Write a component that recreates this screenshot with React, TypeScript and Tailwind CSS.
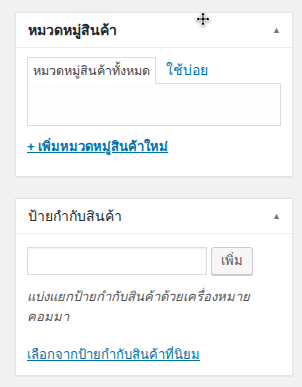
export default function App() {
  return (
    <div className="relative min-h-[387px] w-[302px] bg-[#f1f1f1] pl-[15px] pr-[9px] pt-[12px] font-['Liberation_Sans','Noto_Sans',sans-serif] text-[13px] text-[#444]">
      {/* หมวดหมู่สินค้า */}
      <div className="border border-[#e5e5e5] bg-white shadow-[0_1px_1px_rgba(0,0,0,0.04)]">
        <div className="flex h-[35px] items-center justify-between border-b border-[#eee] pl-[12px] pr-[11px]">
          <h2 className="text-[14px] font-bold leading-[20px] text-[#23282d]">หมวดหมู่สินค้า</h2>
          <span className="text-[9px] leading-[10px] text-[#72777c]">▲</span>
        </div>
        <div className="px-[11px] pb-[19px] pt-[9px]">
          <div className="flex items-end">
            <div className="-mb-px flex h-[27px] items-center border border-b-0 border-[#ddd] bg-white px-[5px] text-[12.5px] leading-[18px] text-[#444]">
              หมวดหมู่สินค้าทั้งหมด
            </div>
            <a href="#" className="flex h-[26px] items-center px-[10px] text-[14px] font-medium leading-[18px] text-[#0073aa]">
              ใช้บ่อย
            </a>
          </div>
          <div className="h-[43px] border border-[#ddd] bg-[#fdfdfd]"></div>
          <a href="#" className="mt-[11px] block text-[13px] font-semibold leading-[20px] text-[#0073aa] underline">
            + เพิ่มหมวดหมู่สินค้าใหม่
          </a>
        </div>
      </div>

      {/* ป้ายกำกับสินค้า */}
      <div className="mt-[21px] border border-[#e5e5e5] bg-white shadow-[0_1px_1px_rgba(0,0,0,0.04)]">
        <div className="flex h-[35px] items-center justify-between border-b border-[#eee] pl-[12px] pr-[11px]">
          <h2 className="text-[14px] font-medium leading-[20px] text-[#23282d]">ป้ายกำกับสินค้า</h2>
          <span className="text-[9px] leading-[10px] text-[#72777c]">▲</span>
        </div>
        <div className="px-[11px] pb-[10px] pt-[13px]">
          <div className="flex gap-[4px]">
            <input className="h-[28px] w-[180px] border border-[#ddd] bg-white shadow-[inset_0_1px_2px_rgba(0,0,0,0.07)]" />
            <button className="h-[28px] rounded-[3px] border border-[#ccc] bg-[#f7f7f7] px-[9px] text-[13px] leading-[18px] text-[#555] shadow-[0_1px_0_#ccc]">
              เพิ่ม
            </button>
          </div>
          <p className="mt-[12px] text-[13px] italic leading-[20px] text-[#555]">
            แบ่งแยกป้ายกำกับสินค้าด้วยเครื่องหมายคอมมา
          </p>
          <a href="#" className="mt-[18px] block leading-[20px] text-[#0073aa] underline">
            เลือกจากป้ายกำกับสินค้าที่นิยม
          </a>
        </div>
      </div>

      {/* move cursor */}
      <svg className="absolute left-[195px] top-[11px] drop-shadow-[0_1px_1px_rgba(0,0,0,0.4)]" width="16" height="16" viewBox="0 0 16 16">
        <path
          d="M8 1 L10.5 4 H9 V7 H12 V5.5 L15 8 L12 10.5 V9 H9 V12 H10.5 L8 15 L5.5 12 H7 V9 H4 V10.5 L1 8 L4 5.5 V7 H7 V4 H5.5 Z"
          fill="#000"
          stroke="#fff"
          strokeWidth="1"
        />
      </svg>
    </div>
  );
}
